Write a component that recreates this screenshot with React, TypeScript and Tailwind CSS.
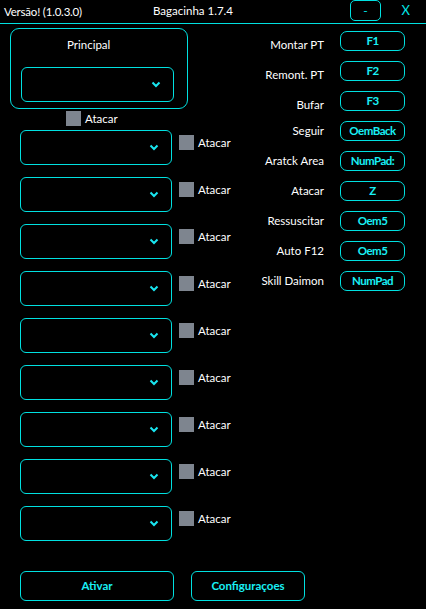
import React from 'react';

const cyanBorder = 'border border-[#00e0e0]';

function Chevron() {
  return (
    <svg width="10" height="7" viewBox="0 0 10 7" className="block">
      <polyline points="1.5,1.5 5,5 8.5,1.5" fill="none" stroke="#19e6f0" strokeWidth="2" />
    </svg>
  );
}

function SelectBox({ className = '' }: { className?: string }) {
  return (
    <div className={`${cyanBorder} rounded-[6px] h-[35px] flex items-center justify-end pr-[12px] ${className}`}>
      <Chevron />
    </div>
  );
}

function Check({ className = '' }: { className?: string }) {
  return (
    <div className={`flex items-center ${className}`}>
      <div className="w-[15px] h-[15px] bg-[#7e858f]" />
      <span className="ml-[4px] text-white text-[11.5px] leading-[15px]">Atacar</span>
    </div>
  );
}

const keys: { label: string; key: string; low?: boolean }[] = [
  { label: 'Montar PT', key: 'F1', low: true },
  { label: 'Remont. PT', key: 'F2', low: true },
  { label: 'Bufar', key: 'F3', low: true },
  { label: 'Seguir', key: 'OemBack' },
  { label: 'Aratck Area', key: 'NumPad:' },
  { label: 'Atacar', key: 'Z' },
  { label: 'Ressuscitar', key: 'Oem5' },
  { label: 'Auto F12', key: 'Oem5' },
  { label: 'Skill Daimon', key: 'NumPad' },
];

export default function App() {
  return (
    <div
      className="w-[426px] h-[609px] bg-black text-white overflow-hidden flex flex-col"
      style={{ fontFamily: 'Lato, "Noto Sans", sans-serif' }}
    >
      {/* title bar */}
      <div className="h-[23px] flex items-center relative">
        <span className="ml-[4px] text-[11.5px] tracking-[-0.2px] leading-none">Versão! (1.0.3.0)</span>
        <span className="absolute left-[153px] top-[5px] text-[11.5px] leading-none">Bagacinha 1.7.4</span>
        <div className="ml-auto mr-[45px] w-[31px] h-[21px] self-start border border-[#00e0e0] rounded-[5px] flex items-center justify-center text-[#00e8e8] text-[12px] leading-none">
          -
        </div>
        <span className="absolute right-[16px] top-[4px] text-[#00e8e8] text-[13px] leading-none">X</span>
      </div>
      <div className="h-px bg-[#00e0e0]" />

      {/* body */}
      <div className="flex flex-1">
        {/* left column */}
        <div className="w-[240px] flex flex-col">
          <div className={`${cyanBorder} rounded-[9px] ml-[10px] mt-[4px] w-[178px] h-[81px] flex flex-col`}>
            <span className="pl-[56px] pt-[8px] text-[11.5px] leading-[15px]">Principal</span>
            <SelectBox className="ml-[10px] mt-[15px] w-[153px]" />
          </div>
          <Check className="ml-[66px] mt-[2px]" />
          <div className="flex flex-col gap-[12px] mt-[4px]">
            {Array.from({ length: 9 }).map((_, i) => (
              <div key={i} className="flex items-start">
                <SelectBox className="ml-[20px] w-[152px]" />
                <Check className="ml-[7px] mt-[5px]" />
              </div>
            ))}
          </div>
        </div>

        {/* right column: hotkeys */}
        <div className="flex-1 flex flex-col gap-[10px] pt-[7px] pr-[21px]">
          {keys.map((k) => (
            <div key={k.label} className="flex items-center justify-end h-[20px]">
              <span className={`text-[11.5px] leading-none mr-[16px] ${k.low ? 'mt-[8px]' : ''}`}>{k.label}</span>
              <div className={`${cyanBorder} rounded-[7px] w-[65px] h-[20px] flex items-center justify-center text-[#19f0f5] text-[11.5px] tracking-[-0.5px] font-bold leading-none overflow-hidden whitespace-nowrap`}>
                {k.key}
              </div>
            </div>
          ))}
        </div>
      </div>

      {/* bottom buttons */}
      <div className="flex h-[30px] mb-[8px]">
        <div className={`${cyanBorder} rounded-[6px] ml-[20px] w-[154px] flex items-center justify-center text-[#19f0f5] text-[11.5px] font-bold`}>
          Ativar
        </div>
        <div className={`${cyanBorder} rounded-[6px] ml-[17px] w-[114px] flex items-center justify-center text-[#19f0f5] text-[11.5px] font-bold`}>
          Configuraçoes
        </div>
      </div>
    </div>
  );
}
